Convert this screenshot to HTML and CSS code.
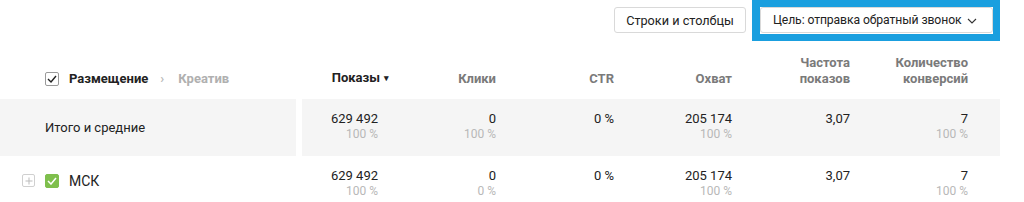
FILE: index.html
```html
<!DOCTYPE html>
<html lang="ru">
<head>
<meta charset="utf-8">
<title>Статистика</title>
<link rel="stylesheet" href="styles.css">
</head>
<body>
<div class="toolbar">
  <button class="btn">Строки и столбцы</button>
  <div class="highlight">
    <button class="btn btn-goal"><span class="goal-text">Цель: отправка обратный звонок</span>
      <svg class="chev" width="10" height="6" viewBox="0 0 10 6"><path d="M1 1l4 4 4-4" fill="none" stroke="#333" stroke-width="1.1"/></svg>
    </button>
  </div>
</div>
<div class="grid">
  <div class="row head">
    <div class="cell label">
      <span class="cb"><svg width="10" height="8" viewBox="0 0 10 8"><path d="M1 4l3 3 5-6" fill="none" stroke="#222" stroke-width="1.4"/></svg></span>
      <span class="crumb-active">Размещение</span>
      <span class="crumb-sep">›</span>
      <span class="crumb">Креатив</span>
    </div>
    <div class="cell num h-main">Показы<span class="sort">▾</span></div>
    <div class="cell num">Клики</div>
    <div class="cell num">CTR</div>
    <div class="cell num">Охват</div>
    <div class="cell num">Частота<br>показов</div>
    <div class="cell num last">Количество<br>конверсий</div>
  </div>
  <div class="row total">
    <div class="cell label">Итого и средние</div>
    <div class="cell num first"><div class="v">629 492</div><div class="p">100 %</div></div>
    <div class="cell num"><div class="v">0</div><div class="p">100 %</div></div>
    <div class="cell num"><div class="v">0 %</div></div>
    <div class="cell num"><div class="v">205 174</div><div class="p">100 %</div></div>
    <div class="cell num"><div class="v">3,07</div></div>
    <div class="cell num last"><div class="v">7</div><div class="p">100 %</div></div>
  </div>
  <div class="row item">
    <div class="cell label">
      <span class="plus"><svg width="8" height="8" viewBox="0 0 8 8"><path d="M4 0.5v7M0.5 4h7" stroke="#bbb" stroke-width="1"/></svg></span>
      <span class="cb cb-on"><svg width="10" height="8" viewBox="0 0 10 8"><path d="M1 4l3 3 5-6" fill="none" stroke="#fff" stroke-width="1.5"/></svg></span>
      <span class="name">МСК</span>
    </div>
    <div class="cell num first"><div class="v">629 492</div><div class="p">100 %</div></div>
    <div class="cell num"><div class="v">0</div><div class="p">0 %</div></div>
    <div class="cell num"><div class="v">0 %</div></div>
    <div class="cell num"><div class="v">205 174</div><div class="p">100 %</div></div>
    <div class="cell num"><div class="v">3,07</div></div>
    <div class="cell num last"><div class="v">7</div><div class="p">100 %</div></div>
  </div>
</div>
</body>
</html>
```

FILE: styles.css
```css
html, body {
  margin: 0;
  padding: 0;
  background: #fff;
  font-family: Roboto, "Noto Sans", sans-serif;
  font-size: 13px;
  color: #222;
}

.toolbar {
  display: flex;
  justify-content: flex-end;
  align-items: flex-start;
  gap: 6px;
  padding-right: 24px;
  height: 41px;
}

.btn {
  box-sizing: border-box;
  white-space: nowrap;
  font-family: inherit;
  font-size: 12.7px;
  color: #222;
  background: #fff;
  border: 1px solid #d9d9d9;
  border-radius: 3px;
  height: 26px;
  padding: 0 12px;
  margin-top: 7px;
  display: flex;
  align-items: center;
  gap: 6px;
  width: 132px;
  justify-content: center;
}

.highlight {
  border: 7px solid #1a9fdf;
  border-left-width: 8px;
  width: 233px;
  height: 27px;
  display: flex;
}

.btn-goal {
  margin-top: 0;
  width: 233px;
  padding: 0 12px;
  justify-content: flex-start;
}
.goal-text {
  font-size: 12.2px;
  letter-spacing: -0.1px;
}

.chev { margin-top: 1px; flex: none; }

.grid { width: 1000px; }

.row {
  display: grid;
  grid-template-columns: 296px repeat(5, 118px) 114px;
}

.cell {
  box-sizing: border-box;
}

.num {
  text-align: right;
  padding-right: 36px;
}
.num.last { padding-right: 32px; }

.head {
  height: 58px;
  align-items: end;
}
.head .cell {
  padding-bottom: 12px;
  font-weight: 700;
  color: #7a7a7a;
  line-height: 16px;
  font-size: 13px;
}
.head .h-main { color: #222; }
.sort {
  font-size: 9px;
  margin-left: 4px;
  margin-right: -11px;
  position: relative;
  top: -1px;
}

.label {
  display: flex;
  align-items: center;
  padding-left: 45px;
}

.head .label {
  padding-left: 45px;
  align-self: end;
}

.cb {
  width: 12px;
  height: 12px;
  border: 1px solid #9a9a9a;
  border-radius: 2px;
  display: inline-flex;
  align-items: center;
  justify-content: center;
  margin-right: 10px;
}
.cb-on {
  background: #7fbf4d;
  border-color: #7fbf4d;
}

.crumb-active { color: #222; }
.crumb-sep {
  color: #bbb;
  margin: 0 14px 0 12px;
  font-weight: 700;
}
.crumb { color: #b0b0b0; }

.total {
  height: 57px;
}
.total .cell { background: #f5f5f5; }
.total .first { border-left: 6px solid #fff; }

.total .num, .item .num { padding-top: 12px; }

.v {
  line-height: 16px;
  color: #222;
}
.p {
  line-height: 14px;
  font-size: 12px;
  color: #b8b8b8;
}

.total .label { color: #222; }

.item {
  height: 46px;
}
.item .first { border-left: 6px solid transparent; }
.item .label { padding-left: 22px; padding-top: 3px; }

.plus {
  width: 11px;
  height: 11px;
  border: 1px solid #d0d0d0;
  border-radius: 2px;
  display: inline-flex;
  align-items: center;
  justify-content: center;
  margin-right: 10px;
}
.name {
  font-size: 14px;
  color: #222;
}
```
